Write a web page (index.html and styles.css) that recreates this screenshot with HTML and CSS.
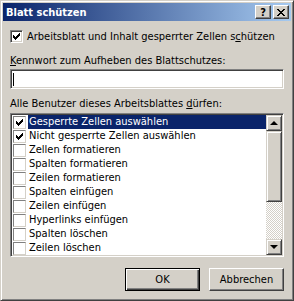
FILE: index.html
```html
<!DOCTYPE html>
<html lang="de">
<head>
  <meta charset="UTF-8">
  <title>Blatt schützen</title>
  <link rel="stylesheet" href="styles.css">
</head>
<body>
  <div class="window">
    <div class="titlebar">
      <span class="title">Blatt schützen</span>
      <div class="caption-btns">
        <span class="cap-btn">?</span>
        <span class="cap-btn">
          <svg width="8" height="7" viewBox="0 0 8 7" shape-rendering="crispEdges">
            <path d="M0 0h2v1h-2zM6 0h2v1h-2zM1 1h2v1h-2zM5 1h2v1h-2zM2 2h4v1h-4zM3 3h2v1h-2zM2 4h4v1h-4zM1 5h2v1h-2zM5 5h2v1h-2zM0 6h2v1h-2zM6 6h2v1h-2z" fill="#000"/>
          </svg>
        </span>
      </div>
    </div>

    <div class="content">
      <label class="check-row">
        <span class="checkbox checked">
          <svg class="tick" width="7" height="7" viewBox="0 0 7 7" shape-rendering="crispEdges">
            <path d="M0 2h1v3h-1zM1 3h1v3h-1zM2 4h1v3h-1zM3 3h1v3h-1zM4 2h1v3h-1zM5 1h1v3h-1zM6 0h1v3h-1z" fill="#000"/>
          </svg>
        </span>
        <span class="check-text">Arbeitsblatt und Inhalt gesperrter Zellen s<u>c</u>hützen</span>
      </label>

      <div class="field-label"><u>K</u>ennwort zum Aufheben des Blattschutzes:</div>
      <div class="textbox"><span class="caret"></span></div>

      <div class="field-label">Alle Benutzer dieses Arbeitsblattes <u>d</u>ürfen:</div>
      <div class="listbox">
        <ul class="items">
          <li class="item selected"><span class="box"><svg class="tick" width="7" height="7" viewBox="0 0 7 7" shape-rendering="crispEdges"><path d="M0 2h1v3h-1zM1 3h1v3h-1zM2 4h1v3h-1zM3 3h1v3h-1zM4 2h1v3h-1zM5 1h1v3h-1zM6 0h1v3h-1z" fill="#000"/></svg></span><span class="text">Gesperrte Zellen auswählen</span></li>
          <li class="item"><span class="box"><svg class="tick" width="7" height="7" viewBox="0 0 7 7" shape-rendering="crispEdges"><path d="M0 2h1v3h-1zM1 3h1v3h-1zM2 4h1v3h-1zM3 3h1v3h-1zM4 2h1v3h-1zM5 1h1v3h-1zM6 0h1v3h-1z" fill="#000"/></svg></span><span class="text">Nicht gesperrte Zellen auswählen</span></li>
          <li class="item"><span class="box"></span><span class="text">Zellen formatieren</span></li>
          <li class="item"><span class="box"></span><span class="text">Spalten formatieren</span></li>
          <li class="item"><span class="box"></span><span class="text">Zeilen formatieren</span></li>
          <li class="item"><span class="box"></span><span class="text">Spalten einfügen</span></li>
          <li class="item"><span class="box"></span><span class="text">Zeilen einfügen</span></li>
          <li class="item"><span class="box"></span><span class="text">Hyperlinks einfügen</span></li>
          <li class="item"><span class="box"></span><span class="text">Spalten löschen</span></li>
          <li class="item"><span class="box"></span><span class="text">Zeilen löschen</span></li>
        </ul>
        <div class="scrollbar">
          <span class="sb-btn"><span class="arrow-up"></span></span>
          <span class="sb-thumb"></span>
          <span class="sb-track"></span>
          <span class="sb-btn"><span class="arrow-down"></span></span>
        </div>
      </div>

      <div class="buttons">
        <button class="btn default">OK</button>
        <button class="btn">Abbrechen</button>
      </div>
    </div>
  </div>
</body>
</html>
```

FILE: styles.css
```css
:root {
  --face: #d4d0c8;
  --shadow: #808080;
  --dark: #404040;
  --highlight: #ffffff;
  --select: #0a246a;
}

html, body {
  margin: 0;
  padding: 0;
  background: var(--face);
}

body {
  font-family: "DejaVu Sans Condensed", "DejaVu Sans", sans-serif;
  font-stretch: condensed;
  font-size: 11px;
  color: #000;
}

.window {
  width: 294px;
  height: 301px;
  box-sizing: border-box;
  background: var(--face);
  border: 1px solid;
  border-color: var(--face) var(--dark) var(--dark) var(--face);
  box-shadow: inset 1px 1px var(--highlight), inset -1px -1px var(--shadow);
  padding: 2px;
}

.titlebar {
  height: 18px;
  display: flex;
  align-items: center;
  justify-content: space-between;
  background: linear-gradient(to right, #0a246a, #a6caf0);
  padding: 0 2px 0 3px;
}

.title {
  color: #fff;
  font-weight: bold;
  font-size: 11px;
}

.caption-btns {
  display: flex;
  gap: 2px;
}

.cap-btn {
  width: 16px;
  height: 14px;
  box-sizing: border-box;
  background: var(--face);
  border: 1px solid;
  border-color: var(--highlight) var(--dark) var(--dark) var(--highlight);
  box-shadow: inset -1px -1px var(--shadow);
  display: flex;
  align-items: center;
  justify-content: center;
  font-weight: bold;
  font-size: 11px;
  line-height: 1;
}

.content {
  padding: 0 7px;
  display: flex;
  flex-direction: column;
}

.check-row {
  margin-top: 8px;
  height: 14px;
  display: flex;
  align-items: center;
  gap: 4px;
}

.check-text {
  white-space: nowrap;
}

.checkbox {
  flex: none;
  width: 13px;
  height: 13px;
  box-sizing: border-box;
  background: #fff;
  border: 1px solid;
  border-color: var(--shadow) var(--highlight) var(--highlight) var(--shadow);
  box-shadow: inset 1px 1px var(--dark), inset -1px -1px var(--face);
  display: flex;
  align-items: center;
  justify-content: center;
}

.field-label {
  margin-top: 11px;
  line-height: 14px;
  white-space: nowrap;
}

.field-label + .listbox {
  margin-top: 2px;
}

.textbox {
  margin-top: 1px;
  height: 20px;
  box-sizing: border-box;
  background: #fff;
  border: 1px solid;
  border-color: var(--shadow) var(--highlight) var(--highlight) var(--shadow);
  box-shadow: inset 1px 1px var(--dark), inset -1px -1px var(--face);
  padding: 3px 2px;
}

.caret {
  display: block;
  width: 1px;
  height: 13px;
  background: #000;
}

.textbox + .field-label {
  margin-top: 8px;
}

.listbox {
  height: 144px;
  box-sizing: border-box;
  background: #fff;
  border: 1px solid;
  border-color: var(--shadow) var(--highlight) var(--highlight) var(--shadow);
  box-shadow: inset 1px 1px var(--dark), inset -1px -1px var(--face);
  padding: 1px;
  display: flex;
}

.items {
  list-style: none;
  margin: 0;
  padding: 0;
  flex: 1;
}

.item {
  height: 14px;
  display: flex;
  align-items: center;
  padding-left: 1px;
}

.box {
  flex: none;
  width: 13px;
  height: 13px;
  box-sizing: border-box;
  border: 1px solid;
  border-color: var(--shadow) var(--face) var(--face) var(--shadow);
  background: #fff;
  display: flex;
  align-items: center;
  justify-content: center;
  margin-right: 2px;
}

.item .text {
  flex: 1;
  line-height: 14px;
  padding-left: 1px;
  white-space: nowrap;
}

.item.selected .text {
  background: var(--select);
  color: #fff;
}

.scrollbar {
  width: 16px;
  display: flex;
  flex-direction: column;
}

.sb-btn, .sb-thumb {
  box-sizing: border-box;
  background: var(--face);
  border: 1px solid;
  border-color: var(--face) var(--dark) var(--dark) var(--face);
  box-shadow: inset 1px 1px var(--highlight), inset -1px -1px var(--shadow);
}

.sb-btn {
  height: 16px;
  display: flex;
  align-items: center;
  justify-content: center;
}

.sb-thumb {
  height: 71px;
}

.sb-track {
  flex: 1;
  background-color: var(--face);
  background-image: repeating-conic-gradient(#fff 0 25%, var(--face) 0 50%);
  background-size: 2px 2px;
}

.arrow-up, .arrow-down {
  width: 0;
  height: 0;
  border-left: 4px solid transparent;
  border-right: 4px solid transparent;
}

.arrow-up {
  border-bottom: 4px solid #000;
}

.arrow-down {
  border-top: 4px solid #000;
}

.buttons {
  margin-top: 11px;
  display: flex;
  justify-content: flex-end;
  gap: 9px;
}

.btn {
  width: 75px;
  height: 23px;
  box-sizing: border-box;
  font: inherit;
  color: #000;
  background: var(--face);
  border: 1px solid;
  border-color: var(--highlight) var(--dark) var(--dark) var(--highlight);
  box-shadow: inset -1px -1px var(--shadow);
  padding: 0;
}

.btn.default {
  border: 1px solid #000;
  box-shadow: inset 1px 1px var(--highlight), inset -1px -1px var(--dark), inset -2px -2px var(--shadow);
}
```
